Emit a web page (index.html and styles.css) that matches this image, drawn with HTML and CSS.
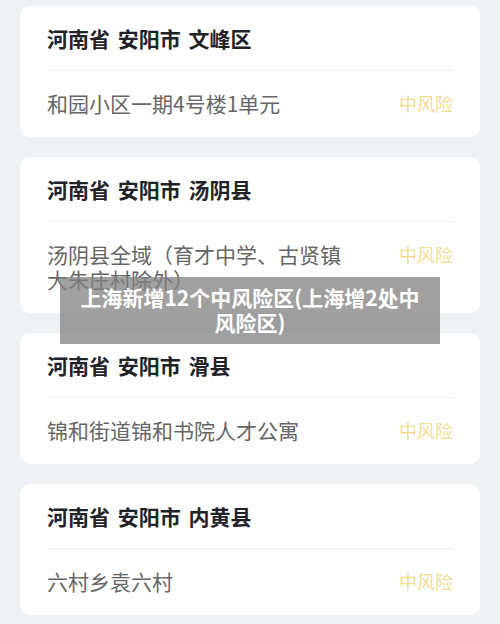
FILE: index.html
```html
<!DOCTYPE html>
<html lang="zh-CN">
<head>
    <meta charset="UTF-8">
    <meta name="viewport" content="width=device-width, initial-scale=1.0">
    <title>中风险区</title>
    <link rel="stylesheet" href="styles.css">
</head>
<body>
<div class="list">
    <div class="card">
        <div class="card-title">河南省 安阳市 文峰区</div>
        <div class="card-row">
            <div class="place">和园小区一期4号楼1单元</div>
            <div class="level">中风险</div>
        </div>
    </div>
    <div class="card">
        <div class="card-title">河南省 安阳市 汤阴县</div>
        <div class="card-row">
            <div class="place">汤阴县全域（育才中学、古贤镇大朱庄村除外）</div>
            <div class="level">中风险</div>
        </div>
    </div>
    <div class="card">
        <div class="card-title">河南省 安阳市 滑县</div>
        <div class="card-row">
            <div class="place">锦和街道锦和书院人才公寓</div>
            <div class="level">中风险</div>
        </div>
    </div>
    <div class="card">
        <div class="card-title">河南省 安阳市 内黄县</div>
        <div class="card-row">
            <div class="place">六村乡袁六村</div>
            <div class="level">中风险</div>
        </div>
    </div>
</div>
<div class="caption">上海新增12个中风险区(上海增2处中风险区)</div>
</body>
</html>
```

FILE: styles.css
```css
body {
    margin: 0;
    background-color: #eff2f5;
    font-family: "Noto Sans CJK SC", "Noto Sans", sans-serif;
    height: 624px;
    overflow: hidden;
    position: relative;
}
.list {
    display: flex;
    flex-direction: column;
    gap: 20px;
    padding: 6px 20px;
}
.card {
    background-color: #ffffff;
    border-radius: 10px;
    padding: 0 27px;
}
.card-title {
    height: 64px;
    display: flex;
    align-items: center;
    font-size: 21px;
    font-weight: bold;
    color: #1f2329;
    word-spacing: 3px;
    border-bottom: 1px solid #eeeeee;
}
.card-row {
    display: flex;
    justify-content: space-between;
    align-items: flex-start;
    gap: 48px;
    padding: 20px 0 21px;
}
.place {
    font-size: 21px;
    line-height: 25px;
    color: #666666;
}
.level {
    flex-shrink: 0;
    font-size: 18px;
    line-height: 25px;
    color: #f3dc8e;
}
.caption {
    position: absolute;
    left: 60px;
    top: 277px;
    width: 380px;
    box-sizing: border-box;
    padding: 8px 12px 9px;
    background-color: rgba(128, 128, 128, 0.75);
    color: #ffffff;
    font-size: 21px;
    font-weight: bold;
    line-height: 25px;
    text-align: center;
}
```
